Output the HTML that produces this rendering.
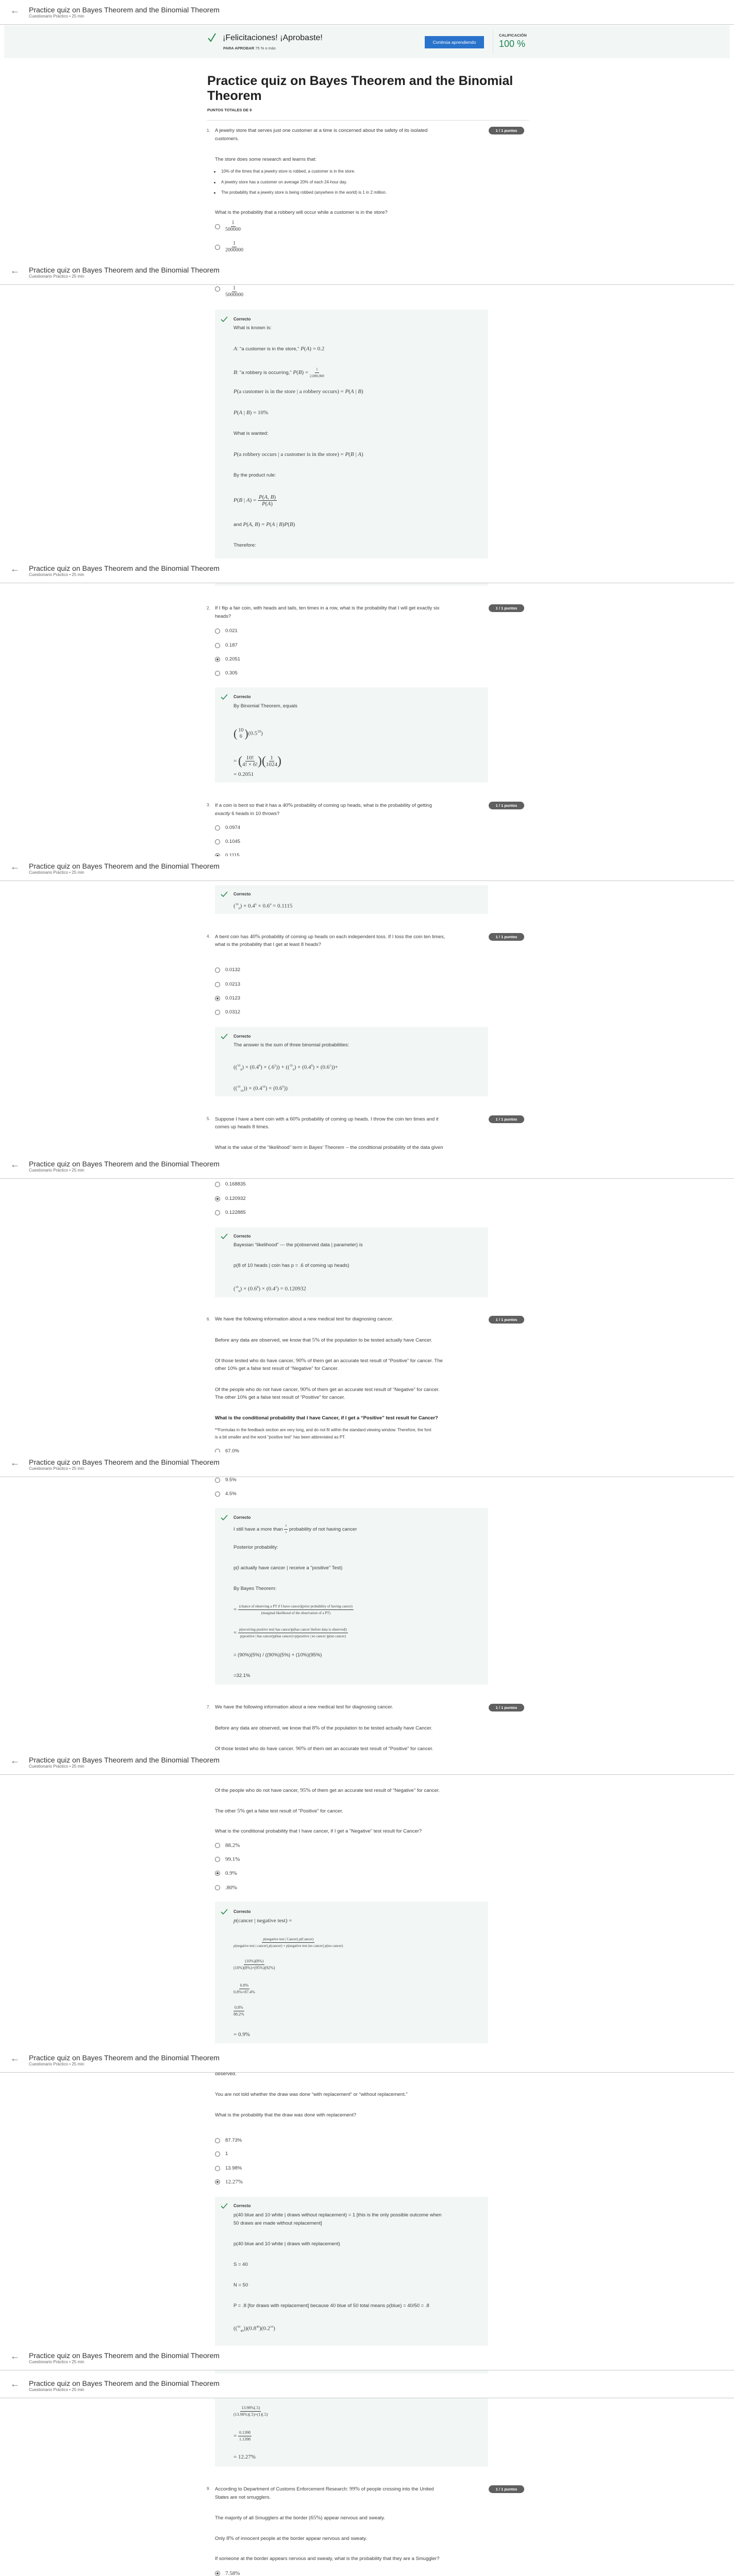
<!DOCTYPE html>
<html style="width:1424px;height:5211px;overflow:hidden"><head><meta charset="utf-8">
<style>
*{margin:0;padding:0;box-sizing:border-box}
html,body{width:1424px;height:5211px;overflow:hidden}
body{position:relative;background:#fff;font-family:"Liberation Sans",sans-serif;color:#3d3d3d}
.a{position:absolute;white-space:nowrap;line-height:14px;font-size:9.5px;color:#3d3d3d}
.q{left:417px}.g{left:453px}.o{left:437px}
.n{left:401px;font-size:8px;color:#555}
.m{font-family:"Liberation Serif",serif;font-size:11px}
.sm{font-size:8px}
.r{position:absolute;left:417px;width:10px;height:10px;border:1px solid #666;border-radius:50%;background:#fff}
.rs::after{content:"";position:absolute;left:2px;top:2px;width:4px;height:4px;border-radius:50%;background:#555}
.pill{position:absolute;left:948px;width:69px;height:15px;border-radius:8px;background:#5f5f5f;color:#fff;font-size:7.5px;font-weight:bold;text-align:center;line-height:15px}
.gb{position:absolute;left:417px;width:530px;background:#f2f7f5}
.ck{position:absolute;left:428px;width:14px;height:12px}
.cr{position:absolute;left:453px;font-size:8px;font-weight:bold;color:#333;line-height:12px}
.hd{position:absolute;left:0;width:1424px;height:48px;background:#fff;border-bottom:1px solid #c8c8c8;z-index:10}
.hd .ar{position:absolute;left:20px;top:10px;font-size:18px;color:#666;line-height:20px}
.hd .ti{position:absolute;left:56px;top:10px;font-size:14px;color:#333;line-height:18px;white-space:nowrap}
.hd .su{position:absolute;left:56px;top:27px;font-size:8px;color:#666;white-space:nowrap}
.fr{display:inline-flex;flex-direction:column;align-items:center;vertical-align:middle;font-family:"Liberation Serif",serif}
.fr span:first-child{border-bottom:1px solid #333;padding:0 2px;line-height:12px}
.fr span:last-child{line-height:12px}
.bul{position:absolute;left:415px;width:3px;height:3px;border-radius:50%;background:#444}
</style></head><body>

<div class="hd" style="top:0"><div class="ar">&#8592;</div><div class="ti">Practice quiz on Bayes Theorem and the Binomial Theorem</div><div class="su">Cuestionario Práctico • 25 min</div></div>
<div class="hd" style="top:505px"><div class="ar">&#8592;</div><div class="ti">Practice quiz on Bayes Theorem and the Binomial Theorem</div><div class="su">Cuestionario Práctico • 25 min</div></div>
<div class="hd" style="top:1084px"><div class="ar">&#8592;</div><div class="ti">Practice quiz on Bayes Theorem and the Binomial Theorem</div><div class="su">Cuestionario Práctico • 25 min</div></div>
<div class="hd" style="top:1662px"><div class="ar">&#8592;</div><div class="ti">Practice quiz on Bayes Theorem and the Binomial Theorem</div><div class="su">Cuestionario Práctico • 25 min</div></div>
<div class="hd" style="top:2240px"><div class="ar">&#8592;</div><div class="ti">Practice quiz on Bayes Theorem and the Binomial Theorem</div><div class="su">Cuestionario Práctico • 25 min</div></div>
<div class="hd" style="top:2819px"><div class="ar">&#8592;</div><div class="ti">Practice quiz on Bayes Theorem and the Binomial Theorem</div><div class="su">Cuestionario Práctico • 25 min</div></div>
<div class="hd" style="top:3397px"><div class="ar">&#8592;</div><div class="ti">Practice quiz on Bayes Theorem and the Binomial Theorem</div><div class="su">Cuestionario Práctico • 25 min</div></div>
<div class="hd" style="top:3975px"><div class="ar">&#8592;</div><div class="ti">Practice quiz on Bayes Theorem and the Binomial Theorem</div><div class="su">Cuestionario Práctico • 25 min</div></div>
<div class="hd" style="top:4553px"><div class="ar">&#8592;</div><div class="ti">Practice quiz on Bayes Theorem and the Binomial Theorem</div><div class="su">Cuestionario Práctico • 25 min</div></div>
<div class="hd" style="top:4607px"><div class="ar">&#8592;</div><div class="ti">Practice quiz on Bayes Theorem and the Binomial Theorem</div><div class="su">Cuestionario Práctico • 25 min</div></div>

<div style="position:absolute;left:8px;top:49px;width:1408px;height:64px;background:#f2f7f5"></div>
<svg style="position:absolute;left:403px;top:64px" width="16" height="18" viewBox="0 0 16 18"><path d="M1 10 L6 16 L15 1" fill="none" stroke="#2a8a4f" stroke-width="2"/></svg>
<div class="a" style="left:432px;top:64px;font-size:16px;line-height:20px;color:#222">¡Felicitaciones! ¡Aprobaste!</div>
<div class="a" style="left:433px;top:88px;font-size:7.5px;line-height:12px;color:#444"><b>PARA APROBAR</b> 75 % o más</div>
<div style="position:absolute;left:824px;top:70px;width:115px;height:24px;background:#2a73cc;color:#fff;font-size:8.5px;text-align:center;line-height:24px">Continúa aprendiendo</div>
<div style="position:absolute;left:956px;top:58px;width:1px;height:46px;background:#dde3e0"></div>
<div class="a" style="left:968px;top:63px;font-size:7.5px;line-height:12px;color:#444;font-weight:bold">CALIFICACIÓN</div>
<div class="a" style="left:968px;top:75px;font-size:18px;line-height:20px;color:#1f8354">100 %</div>

<div class="a" style="left:402px;top:143px;font-size:25px;line-height:29px;font-weight:bold;color:#1f1f1f;white-space:normal;width:600px">Practice quiz on Bayes Theorem and the Binomial Theorem</div>
<div class="a" style="left:402px;top:208px;font-size:7.5px;line-height:12px;font-weight:bold;color:#333">PUNTOS TOTALES DE 9</div>
<div style="position:absolute;left:402px;top:233px;width:624px;height:1px;background:#ddd"></div>

<div class="a n" style="top:247px">1.</div>
<div class="a q" style="top:247px">A jewelry store that serves just one customer at a time is concerned about the safety of its isolated</div>
<div class="a q" style="top:263px">customers.</div>
<div class="pill" style="top:246px">1 / 1 puntos</div>
<div class="a q" style="top:303px">The store does some research and learns that:</div>
<div class="bul" style="top:332px"></div><div class="a sm" style="left:429px;top:326px">10% of the times that a jewelry store is robbed, a customer is in the store.</div>
<div class="bul" style="top:353px"></div><div class="a sm" style="left:429px;top:347px">A jewelry store has a customer on average 20% of each 24-hour day.</div>
<div class="bul" style="top:373px"></div><div class="a sm" style="left:429px;top:367px">The probability that a jewelry store is being robbed (anywhere in the world) is 1 in 2 million.</div>
<div class="a q" style="top:406px">What is the probability that a robbery will occur while a customer is in the store?</div>
<div class="r" style="top:435px"></div><div class="a o" style="top:427px"><span class="fr" style="font-size:10px"><span>1</span><span>500000</span></span></div>
<div class="r" style="top:475px"></div><div class="a o" style="top:467px"><span class="fr" style="font-size:10px"><span>1</span><span>2000000</span></span></div>
<div class="r" style="top:556px"></div><div class="a o" style="top:554px"><span class="fr" style="font-size:10px"><span>1</span><span>5000000</span></span></div>

<div class="gb" style="top:601px;height:536px"></div>
<svg class="ck" style="top:614px" viewBox="0 0 14 12"><path d="M1 6 L5 10 L13 1" fill="none" stroke="#2a8a4f" stroke-width="1.6"/></svg>
<div class="cr" style="top:614px">Correcto</div>
<div class="a g" style="top:630px">What is known is:</div>
<div class="a g" style="top:670px"><i class="m">A</i>: "a customer is in the store," <span class="m"><i>P</i>(<i>A</i>) = 0.2</span></div>
<div class="a g" style="top:711px"><i class="m">B</i>: "a robbery is occurring," <span class="m"><i>P</i>(<i>B</i>) = </span><span class="fr" style="font-size:7px"><span>1</span><span>2,000,000</span></span></div>
<div class="a g m" style="top:753px"><i>P</i>(a customer is in the store | a robbery occurs) = <i>P</i>(<i>A</i> | <i>B</i>)</div>
<div class="a g m" style="top:794px"><i>P</i>(<i>A</i> | <i>B</i>) = 10%</div>
<div class="a g" style="top:835px">What is wanted:</div>
<div class="a g m" style="top:875px"><i>P</i>(a robbery occurs | a customer is in the store) = <i>P</i>(<i>B</i> | <i>A</i>)</div>
<div class="a g" style="top:916px">By the product rule:</div>
<div class="a g m" style="top:958px;line-height:26px"><i>P</i>(<i>B</i> | <i>A</i>) = <span class="fr"><span><i>P</i>(<i>A</i>, <i>B</i>)</span><span><i>P</i>(<i>A</i>)</span></span></div>
<div class="a g" style="top:1011px">and <span class="m"><i>P</i>(<i>A</i>, <i>B</i>) = <i>P</i>(<i>A</i> | <i>B</i>)<i>P</i>(<i>B</i>)</span></div>
<div class="a g" style="top:1052px">Therefore:</div>

<div class="a n" style="top:1174px">2.</div>
<div class="a q" style="top:1174px">If I flip a fair coin, with heads and tails, ten times in a row, what is the probability that I will get exactly six</div>
<div class="a q" style="top:1190px">heads?</div>
<div class="pill" style="top:1173px">1 / 1 puntos</div>
<div class="r" style="top:1220px"></div><div class="a o" style="top:1218px">0.021</div>
<div class="r" style="top:1248px"></div><div class="a o" style="top:1246px">0.187</div>
<div class="r rs" style="top:1275px"></div><div class="a o" style="top:1273px">0.2051</div>
<div class="r" style="top:1302px"></div><div class="a o" style="top:1300px">0.305</div>
<div class="gb" style="top:1334px;height:185px"></div>
<svg class="ck" style="top:1347px" viewBox="0 0 14 12"><path d="M1 6 L5 10 L13 1" fill="none" stroke="#2a8a4f" stroke-width="1.6"/></svg>
<div class="cr" style="top:1347px">Correcto</div>
<div class="a g" style="top:1364px">By Binomial Theorem, equals</div>
<div class="a g m" style="top:1407px;line-height:26px"><span style="font-size:22px;vertical-align:middle">(</span><span class="fr" style="font-size:10px"><span style="border:0">10</span><span>6</span></span><span style="font-size:22px;vertical-align:middle">)</span>(0.5<sup style="font-size:7px">10</sup>)</div>
<div class="a g m" style="top:1462px;line-height:30px">= <span style="font-size:24px;vertical-align:middle">(</span><span class="fr"><span>10!</span><span>4! × 6!</span></span><span style="font-size:24px;vertical-align:middle">)(</span><span class="fr"><span>1</span><span>1024</span></span><span style="font-size:24px;vertical-align:middle">)</span></div>
<div class="a g m" style="top:1496px">= 0.2051</div>

<div class="a n" style="top:1556px">3.</div>
<div class="a q" style="top:1556px">If a coin is bent so that it has a <span class="m">40%</span> probability of coming up heads, what is the probability of getting</div>
<div class="a q" style="top:1573px"><i>exactly</i> 6 heads in 10 throws?</div>
<div class="pill" style="top:1556px">1 / 1 puntos</div>
<div class="r" style="top:1602px"></div><div class="a o" style="top:1600px">0.0974</div>
<div class="r" style="top:1629px"></div><div class="a o" style="top:1627px">0.1045</div>
<div class="r rs" style="top:1656px"></div><div class="a o" style="top:1654px">0.1115</div>
<div class="gb" style="top:1718px;height:56px"></div>
<svg class="ck" style="top:1730px" viewBox="0 0 14 12"><path d="M1 6 L5 10 L13 1" fill="none" stroke="#2a8a4f" stroke-width="1.6"/></svg>
<div class="cr" style="top:1730px">Correcto</div>
<div class="a g m" style="top:1749px">(<sup style="font-size:6px">10</sup><sub style="font-size:6px">6</sub>) × 0.4<sup style="font-size:6px">6</sup> × 0.6<sup style="font-size:6px">4</sup> = 0.1115</div>

<div class="a n" style="top:1811px">4.</div>
<div class="a q" style="top:1811px">A bent coin has <span class="m">40%</span> probability of coming up heads on each independent toss. If I toss the coin ten times,</div>
<div class="a q" style="top:1827px">what is the probability that I get at least 8 heads?</div>
<div class="pill" style="top:1811px">1 / 1 puntos</div>
<div class="r" style="top:1878px"></div><div class="a o" style="top:1876px">0.0132</div>
<div class="r" style="top:1906px"></div><div class="a o" style="top:1904px">0.0213</div>
<div class="r rs" style="top:1933px"></div><div class="a o" style="top:1931px">0.0123</div>
<div class="r" style="top:1960px"></div><div class="a o" style="top:1958px">0.0312</div>
<div class="gb" style="top:1993px;height:135px"></div>
<svg class="ck" style="top:2006px" viewBox="0 0 14 12"><path d="M1 6 L5 10 L13 1" fill="none" stroke="#2a8a4f" stroke-width="1.6"/></svg>
<div class="cr" style="top:2006px">Correcto</div>
<div class="a g" style="top:2022px">The answer is the sum of three binomial probabilities:</div>
<div class="a g m" style="top:2062px">((<sup style="font-size:6px">10</sup><sub style="font-size:6px">8</sub>) × (0.4<sup style="font-size:6px">8</sup>) × (.6<sup style="font-size:6px">2</sup>)) + ((<sup style="font-size:6px">10</sup><sub style="font-size:6px">9</sub>) × (0.4<sup style="font-size:6px">9</sup>) × (0.6<sup style="font-size:6px">1</sup>))+</div>
<div class="a g m" style="top:2103px">((<sup style="font-size:6px">10</sup><sub style="font-size:6px">10</sub>)) × (0.4<sup style="font-size:6px">10</sup>) × (0.6<sup style="font-size:6px">0</sup>))</div>

<div class="a n" style="top:2165px">5.</div>
<div class="a q" style="top:2165px">Suppose I have a bent coin with a <span class="m">60%</span> probability of coming up heads. I throw the coin ten times and it</div>
<div class="a q" style="top:2181px">comes up heads 8 times.</div>
<div class="pill" style="top:2165px">1 / 1 puntos</div>
<div class="a q" style="top:2221px">What is the value of the “likelihood” term in Bayes’ Theorem -- the conditional probability of the data given</div>
<div class="r" style="top:2294px"></div><div class="a o" style="top:2292px">0.168835</div>
<div class="r rs" style="top:2322px"></div><div class="a o" style="top:2320px">0.120932</div>
<div class="r" style="top:2349px"></div><div class="a o" style="top:2347px">0.122885</div>
<div class="gb" style="top:2382px;height:136px"></div>
<svg class="ck" style="top:2394px" viewBox="0 0 14 12"><path d="M1 6 L5 10 L13 1" fill="none" stroke="#2a8a4f" stroke-width="1.6"/></svg>
<div class="cr" style="top:2394px">Correcto</div>
<div class="a g" style="top:2410px">Bayesian “likelihood” --- the p(observed data | parameter) is</div>
<div class="a g" style="top:2450px">p(8 of 10 heads | coin has p = .6 of coming up heads)</div>
<div class="a g m" style="top:2492px">(<sup style="font-size:6px">10</sup><sub style="font-size:6px">8</sub>) × (0.6<sup style="font-size:6px">8</sup>) × (0.4<sup style="font-size:6px">2</sup>) = 0.120932</div>

<div class="a n" style="top:2554px">6.</div>
<div class="a q" style="top:2554px">We have the following information about a new medical test for diagnosing cancer.</div>
<div class="pill" style="top:2554px">1 / 1 puntos</div>
<div class="a q" style="top:2594px">Before any data are observed, we know that <span class="m">5%</span> of the population to be tested actually have Cancer.</div>
<div class="a q" style="top:2634px">Of those tested who do have cancer, <span class="m">90%</span> of them get an accurate test result of “Positive” for cancer. The</div>
<div class="a q" style="top:2650px">other 10% get a false test result of “Negative” for Cancer.</div>
<div class="a q" style="top:2690px">Of the people who do not have cancer, <span class="m">90%</span> of them get an accurate test result of “Negative” for cancer.</div>
<div class="a q" style="top:2706px">The other 10% get a false test result of “Positive” for cancer.</div>
<div class="a q" style="top:2746px;font-weight:bold;color:#222">What is the conditional probability that I have Cancer, if I get a “Positive” test result for Cancer?</div>
<div class="a q sm" style="top:2769px">**Formulas in the feedback section are very long, and do not fit within the standard viewing window. Therefore, the font</div>
<div class="a q sm" style="top:2783px">is a bit smaller and the word "positive test" has been abbreviated as PT.</div>
<div class="r" style="top:2812px"></div><div class="a o" style="top:2810px">67.0%</div>
<div class="r" style="top:2868px"></div><div class="a o" style="top:2866px">9.5%</div>
<div class="r" style="top:2895px"></div><div class="a o" style="top:2893px">4.5%</div>
<div class="gb" style="top:2927px;height:343px"></div>
<svg class="ck" style="top:2940px" viewBox="0 0 14 12"><path d="M1 6 L5 10 L13 1" fill="none" stroke="#2a8a4f" stroke-width="1.6"/></svg>
<div class="cr" style="top:2940px">Correcto</div>
<div class="a g" style="top:2956px">I still have a more than <span class="fr" style="font-size:6px"><span>2</span><span>3</span></span> probability of not having cancer</div>
<div class="a g" style="top:2997px">Posterior probability:</div>
<div class="a g" style="top:3037px">p(I actually have cancer | receive a "positive" Test)</div>
<div class="a g" style="top:3077px">By Bayes Theorem:</div>
<div class="a g m" style="top:3112px;line-height:24px">= <span class="fr" style="font-size:7px"><span>(chance of observing a PT if I have cancer)(prior probability of having cancer)</span><span>(marginal likelihood of the observation of a PT)</span></span></div>
<div class="a g m" style="top:3157px;line-height:24px">= <span class="fr" style="font-size:7px"><span>p(receiving positive test| has cancer)p(has cancer |before data is observed|)</span><span>p(positive | has cancer)p(has cancer)+p(positive | no cancer )p(no cancer)</span></span></div>
<div class="a g" style="top:3206px">= (90%)(5%) / ((90%)(5%) + (10%)(95%)</div>
<div class="a g" style="top:3246px">=32.1%</div>

<div class="a n" style="top:3307px">7.</div>
<div class="a q" style="top:3307px">We have the following information about a new medical test for diagnosing cancer.</div>
<div class="pill" style="top:3307px">1 / 1 puntos</div>
<div class="a q" style="top:3347px">Before any data are observed, we know that <span class="m">8%</span> of the population to be tested actually have Cancer.</div>
<div class="a q" style="top:3387px">Of those tested who do have cancer, <span class="m">90%</span> of them get an accurate test result of "Positive" for cancer.</div>
<div class="a q" style="top:3468px">Of the people who do not have cancer, <span class="m">95%</span> of them get an accurate test result of "Negative" for cancer.</div>
<div class="a q" style="top:3508px">The other <span class="m">5%</span> get a false test result of "Positive" for cancer.</div>
<div class="a q" style="top:3548px">What is the conditional probability that I have cancer, if I get a "Negative" test result for Cancer?</div>
<div class="r" style="top:3577px"></div><div class="a o m" style="top:3575px">88.2%</div>
<div class="r" style="top:3604px"></div><div class="a o m" style="top:3602px">99.1%</div>
<div class="r rs" style="top:3631px"></div><div class="a o m" style="top:3629px">0.9%</div>
<div class="r" style="top:3659px"></div><div class="a o m" style="top:3657px">.80%</div>
<div class="gb" style="top:3691px;height:275px"></div>
<svg class="ck" style="top:3705px" viewBox="0 0 14 12"><path d="M1 6 L5 10 L13 1" fill="none" stroke="#2a8a4f" stroke-width="1.6"/></svg>
<div class="cr" style="top:3705px">Correcto</div>
<div class="a g m" style="top:3721px"><i>p</i>(cancer | negative test) =</div>
<div class="a g m" style="top:3758px;line-height:24px"><span class="fr" style="font-size:7px"><span><i>p</i>(negative test | Cancer) <i>p</i>(Cancer)</span><span><i>p</i>(negative test | cancer) <i>p</i>(cancer) + <i>p</i>(negative test |no cancer) <i>p</i>(no cancer)</span></span></div>
<div class="a g m" style="top:3801px;line-height:24px"><span class="fr" style="font-size:8px"><span>(10%)(8%)</span><span>(10%)(8%)+(95%)(92%)</span></span></div>
<div class="a g m" style="top:3848px;line-height:24px"><span class="fr" style="font-size:8px"><span>0.8%</span><span>0.8%+87.4%</span></span></div>
<div class="a g m" style="top:3891px;line-height:24px"><span class="fr" style="font-size:8px"><span>0.8%</span><span>88.2%</span></span></div>
<div class="a g m" style="top:3942px">= 0.9%</div>

<div class="a q" style="top:4019px">observed.</div>
<div class="a q" style="top:4059px">You are not told whether the draw was done “with replacement” or “without replacement.”</div>
<div class="a q" style="top:4099px">What is the probability that the draw was done with replacement?</div>
<div class="r" style="top:4150px"></div><div class="a o" style="top:4148px">87.73%</div>
<div class="r" style="top:4176px"></div><div class="a o" style="top:4174px">1</div>
<div class="r" style="top:4204px"></div><div class="a o" style="top:4202px">13.98%</div>
<div class="r rs" style="top:4230px"></div><div class="a o m" style="top:4228px">12.27%</div>
<div class="gb" style="top:4264px;height:524px"></div>
<svg class="ck" style="top:4276px" viewBox="0 0 14 12"><path d="M1 6 L5 10 L13 1" fill="none" stroke="#2a8a4f" stroke-width="1.6"/></svg>
<div class="cr" style="top:4276px">Correcto</div>
<div class="a g" style="top:4293px">p(40 blue and 10 white | draws without replacement) = 1 [this is the only possible outcome when</div>
<div class="a g" style="top:4309px">50 draws are made without replacement]</div>
<div class="a g" style="top:4349px">p(40 blue and 10 white | draws with replacement)</div>
<div class="a g" style="top:4389px">S = 40</div>
<div class="a g" style="top:4429px">N = 50</div>
<div class="a g" style="top:4469px">P = .8 [for draws with replacement] because 40 blue of 50 total means p(blue) = 40/50 = .8</div>
<div class="a g m" style="top:4510px">((<sup style="font-size:6px">50</sup><sub style="font-size:6px">40</sub>))(0.8<sup style="font-size:6px">40</sup>)(0.2<sup style="font-size:6px">10</sup>)</div>
<div class="a g m" style="top:4668px;line-height:24px"><span class="fr" style="font-size:8px"><span>13.98%(.5)</span><span>(13.98%)(.5)+(1)(.5)</span></span></div>
<div class="a g m" style="top:4716px;line-height:24px">= <span class="fr" style="font-size:8px"><span>0.1398</span><span>1.1398</span></span></div>
<div class="a g m" style="top:4762px">= 12.27%</div>

<div class="a n" style="top:4824px">9.</div>
<div class="a q" style="top:4824px">According to Department of Customs Enforcement Research: <span class="m">99%</span> of people crossing into the United</div>
<div class="a q" style="top:4841px">States are not smugglers.</div>
<div class="pill" style="top:4824px">1 / 1 puntos</div>
<div class="a q" style="top:4880px">The majority of all Smugglers at the border (<span class="m">65%</span>) appear nervous and sweaty.</div>
<div class="a q" style="top:4920px">Only <span class="m">8%</span> of innocent people at the border appear nervous and sweaty.</div>
<div class="a q" style="top:4960px">If someone at the border appears nervous and sweaty, what is the probability that they are a Smuggler?</div>
<div class="r rs" style="top:4990px"></div><div class="a o m" style="top:4988px">7.58%</div>
<div class="r" style="top:5017px"></div><div class="a o m" style="top:5015px">92.42%</div>
<div class="r" style="top:5043px"></div><div class="a o m" style="top:5041px">7.92%</div>
<div class="r" style="top:5070px"></div><div class="a o m" style="top:5068px">8.57%</div>
<div class="gb" style="top:5104px;height:107px"></div>
<svg class="ck" style="top:5116px" viewBox="0 0 14 12"><path d="M1 6 L5 10 L13 1" fill="none" stroke="#2a8a4f" stroke-width="1.6"/></svg>
<div class="cr" style="top:5116px">Correcto</div>
<div class="a g" style="top:5132px">By Bayes’ Theorem, the answer is</div>
<div class="a g m" style="top:5170px;line-height:26px"><span class="fr" style="font-size:10.5px"><span>(.65)(.01)</span><span>((.65)(.01) + (.08)(.99))</span></span></div>

</body></html>
